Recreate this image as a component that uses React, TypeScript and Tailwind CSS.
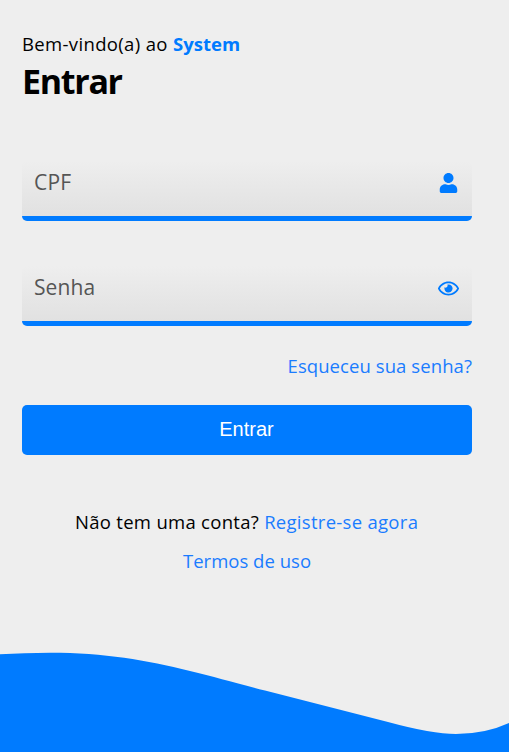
import { FaUser, FaRegEye } from 'react-icons/fa';

export default function App() {
  return (
    <div className="flex h-[752px] w-full flex-col overflow-hidden bg-[#eeeeee] font-['Open_Sans','Noto_Sans',sans-serif] text-black">
      <main className="flex w-[472px] flex-col pl-[22px] pt-[30px]">
        <p className="h-[27px] whitespace-nowrap text-[18.5px] leading-[27px] tracking-[0.35px]">
          Bem-vindo(a) ao <b className="font-bold tracking-[0.02px] text-[#007bff]">System</b>
        </p>
        <h1 className="h-[49px] text-[34px] font-bold leading-[48px] tracking-[-1.3px]">Entrar</h1>
        <label className="mt-[55px] flex h-[60px] items-center justify-between rounded-[5px] border-b-[5px] border-[#007bff] bg-linear-to-b from-[#eeeeee] to-[#e1e1e1] pl-3 pr-[14px]">
          <span className="pb-[14px] text-[21px] leading-[30px] tracking-[0.25px] text-[#555555]">CPF</span>
          <FaUser className="mb-[12px] h-[20px] w-[19px] text-[#007bff]" />
        </label>
        <label className="mt-[45px] flex h-[60px] items-center justify-between rounded-[5px] border-b-[5px] border-[#007bff] bg-linear-to-b from-[#eeeeee] to-[#e1e1e1] pl-3 pr-[13px]">
          <span className="pb-[14px] text-[21px] leading-[30px] tracking-[0.1px] text-[#555555]">Senha</span>
          <FaRegEye className="mb-[11px] h-[19px] w-[21px] text-[#007bff]" />
        </label>
        <a className="mt-[26px] h-[28px] self-end whitespace-nowrap text-[18.5px] leading-[28px] tracking-[0.08px] text-[#1a7cff]">Esqueceu sua senha?</a>
        <button className="mt-[25px] h-[50px] rounded-[5px] bg-[#007bff] pb-[2px] pr-[1px] font-['Liberation_Sans',Arial,sans-serif] text-[20px] text-white">Entrar</button>
        <p className="mt-[53px] whitespace-nowrap pl-[53px] text-[18.5px] leading-[28px] tracking-[0.29px]">
          Não tem uma conta? <a className="text-[#1a7cff]">Registre-se agora</a>
        </p>
        <a className="mt-[11px] self-center text-[18.5px] leading-[28px] tracking-[0.02px] text-[#1a7cff]">Termos de uso</a>
      </main>
      <svg className="mt-auto block h-[112px] w-[509px] shrink-0" viewBox="0 640 509 112" fill="#007bff">
        <path d="M0 654.3Q24 652.7 50 652.7C105 652.7 146 660 190 671C215 677 235 683 265 690.5L388 722Q432 734 456 734Q485 734 509 723V752H0Z" />
      </svg>
    </div>
  );
}
